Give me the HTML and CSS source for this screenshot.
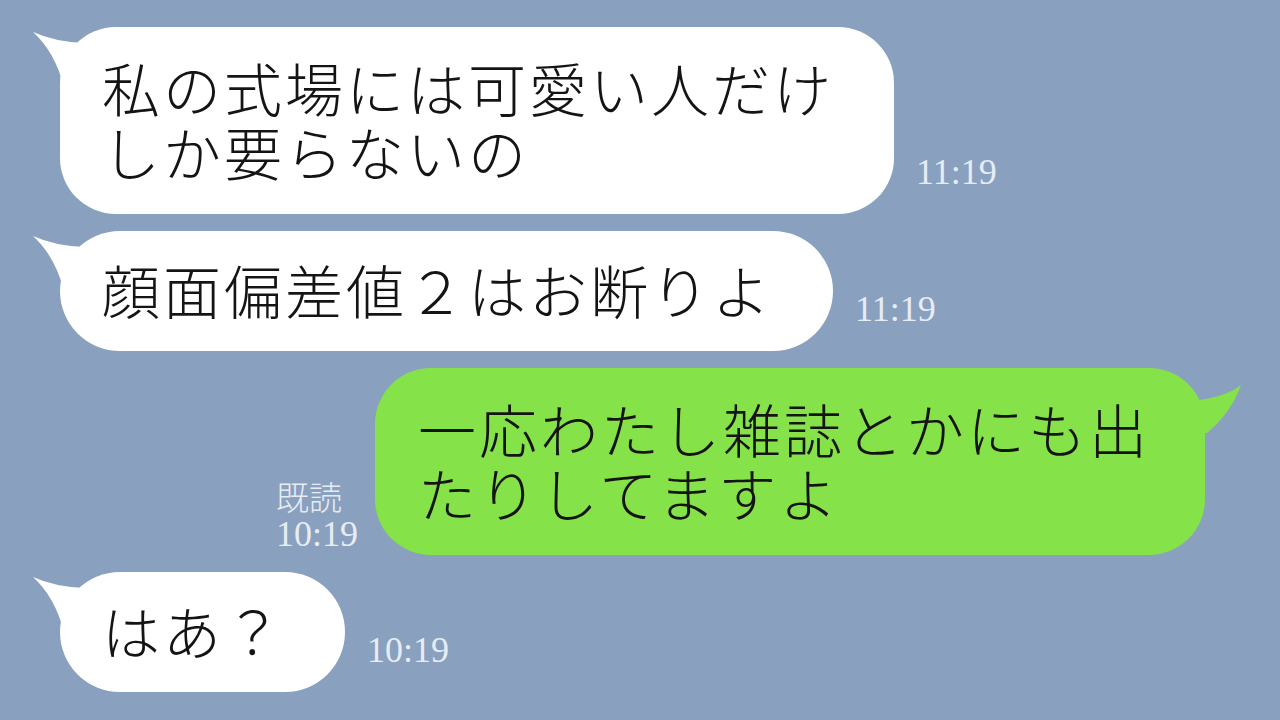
FILE: index.html
```html
<!DOCTYPE html>
<html>
<head>
    <title>LINE トーク</title>
    <link rel="stylesheet" href="styles.css">
</head>
<body>
    <div class="chat">
        <div class="row">
            <div class="bubble them">
                <svg class="tail" viewBox="0 0 60 60"><path d="M3 5 Q25 15 55 16 L55 60 L34 60 Q25 25 3 5 Z"/></svg>
                私の式場には可愛い人だけ<br>しか要らないの
            </div>
            <div class="time">11:19</div>
        </div>
        <div class="row">
            <div class="bubble them one">
                <svg class="tail" viewBox="0 0 60 60"><path d="M3 5 Q25 15 55 16 L55 60 L34 60 Q25 25 3 5 Z"/></svg>
                顔面偏差値２はお断りよ
            </div>
            <div class="time">11:19</div>
        </div>
        <div class="row mine">
            <div class="read">
                <div class="read-label">既読</div>
                <div class="read-time">10:19</div>
            </div>
            <div class="bubble me">
                <svg class="tail" viewBox="0 0 60 70"><path d="M56 17 Q40 30 5 33 L5 65 L22 65 Q46 45 56 17 Z"/></svg>
                一応わたし雑誌とかにも出<br>たりしてますよ
            </div>
        </div>
        <div class="row">
            <div class="bubble them one">
                <svg class="tail" viewBox="0 0 60 60"><path d="M3 5 Q25 15 55 16 L55 60 L34 60 Q25 25 3 5 Z"/></svg>
                はあ？
            </div>
            <div class="time">10:19</div>
        </div>
    </div>
</body>
</html>
```

FILE: styles.css
```css
body {
    margin: 0;
    background-color: #8aa0bf;
    font-family: "Noto Sans CJK JP", sans-serif;
}
.chat {
    width: 1280px;
    height: 720px;
    box-sizing: border-box;
    padding: 27px 75px 0 60px;
    display: flex;
    flex-direction: column;
    gap: 17px;
    overflow: hidden;
}
.row {
    display: flex;
    align-items: flex-end;
    gap: 22px;
}
.row.mine {
    justify-content: flex-end;
    gap: 17px;
}
.bubble {
    position: relative;
    padding: 28px 60px 31px 42px;
    border-radius: 56px;
    font-size: 58px;
    font-weight: 300;
    line-height: 64px;
    letter-spacing: 3px;
    color: #141414;
    white-space: nowrap;
}
.bubble.one {
    padding-top: 26px;
    padding-bottom: 30px;
    border-radius: 60px;
}
.them {
    background-color: #fff;
}
.me {
    background-color: #85e249;
    padding-left: 43px;
    padding-right: 55px;
}
.tail {
    position: absolute;
    top: 0;
    width: 60px;
}
.them .tail {
    left: -30px;
    height: 60px;
    fill: #fff;
}
.me .tail {
    right: -40px;
    height: 70px;
    fill: #85e249;
}
.time {
    font-family: "Liberation Serif", serif;
    font-size: 36px;
    line-height: 36px;
    color: #e6ecf4;
    margin-bottom: 24px;
}
.read {
    display: flex;
    flex-direction: column;
    align-items: flex-start;
    margin-bottom: 3px;
    color: #e6ecf4;
}
.read-label {
    font-size: 33px;
    font-weight: 300;
    line-height: 40px;
}
.read-time {
    font-family: "Liberation Serif", serif;
    font-size: 36px;
    line-height: 36px;
}
```
